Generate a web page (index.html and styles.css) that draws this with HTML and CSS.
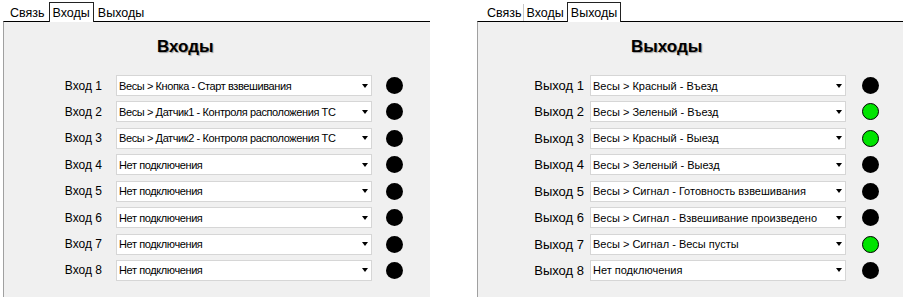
FILE: index.html
```html
<!DOCTYPE html>
<html lang="ru">
<head>
  <meta charset="UTF-8" />
  <meta name="viewport" content="width=device-width, initial-scale=1.0"/>
  <title>Входы / Выходы</title>
  <link rel="stylesheet" href="styles.css">
</head>
<body>

  <div class="tabctl">
    <div class="tabs">
      <span class="tab">Связь</span>
      <span class="tab active">Входы</span>
      <span class="tab">Выходы</span>
    </div>
    <div class="panel">
      <h2 class="title">Входы</h2>
      <div class="rows">
        <span class="label">Вход 1</span>
        <div class="combo"><span>Весы &gt; Кнопка - Старт взвешивания</span><i class="arrow"></i></div>
        <span class="led"></span>

        <span class="label">Вход 2</span>
        <div class="combo"><span>Весы &gt; Датчик1 - Контроля расположения ТС</span><i class="arrow"></i></div>
        <span class="led"></span>

        <span class="label">Вход 3</span>
        <div class="combo"><span>Весы &gt; Датчик2 - Контроля расположения ТС</span><i class="arrow"></i></div>
        <span class="led"></span>

        <span class="label">Вход 4</span>
        <div class="combo"><span>Нет подключения</span><i class="arrow"></i></div>
        <span class="led"></span>

        <span class="label">Вход 5</span>
        <div class="combo"><span>Нет подключения</span><i class="arrow"></i></div>
        <span class="led"></span>

        <span class="label">Вход 6</span>
        <div class="combo"><span>Нет подключения</span><i class="arrow"></i></div>
        <span class="led"></span>

        <span class="label">Вход 7</span>
        <div class="combo"><span>Нет подключения</span><i class="arrow"></i></div>
        <span class="led"></span>

        <span class="label">Вход 8</span>
        <div class="combo"><span>Нет подключения</span><i class="arrow"></i></div>
        <span class="led"></span>
      </div>
    </div>
  </div>

  <div class="tabctl second">
    <div class="tabs">
      <span class="tab sep">Связь</span>
      <span class="tab">Входы</span>
      <span class="tab active">Выходы</span>
    </div>
    <div class="panel">
      <h2 class="title">Выходы</h2>
      <div class="rows outputs">
        <span class="label">Выход 1</span>
        <div class="combo"><span>Весы &gt; Красный - Въезд</span><i class="arrow"></i></div>
        <span class="led"></span>

        <span class="label">Выход 2</span>
        <div class="combo"><span>Весы &gt; Зеленый - Въезд</span><i class="arrow"></i></div>
        <span class="led on"></span>

        <span class="label">Выход 3</span>
        <div class="combo"><span>Весы &gt; Красный - Выезд</span><i class="arrow"></i></div>
        <span class="led on"></span>

        <span class="label">Выход 4</span>
        <div class="combo"><span>Весы &gt; Зеленый - Выезд</span><i class="arrow"></i></div>
        <span class="led"></span>

        <span class="label">Выход 5</span>
        <div class="combo"><span>Весы &gt; Сигнал - Готовность взвешивания</span><i class="arrow"></i></div>
        <span class="led"></span>

        <span class="label">Выход 6</span>
        <div class="combo"><span>Весы &gt; Сигнал - Взвешивание произведено</span><i class="arrow"></i></div>
        <span class="led"></span>

        <span class="label">Выход 7</span>
        <div class="combo"><span>Весы &gt; Сигнал - Весы пусты</span><i class="arrow"></i></div>
        <span class="led on"></span>

        <span class="label">Выход 8</span>
        <div class="combo"><span>Нет подключения</span><i class="arrow"></i></div>
        <span class="led"></span>
      </div>
    </div>
  </div>

</body>
</html>
```

FILE: styles.css
```css
body {
  margin: 0;
  font-family: "Liberation Sans", Arial, sans-serif;
  font-size: 12px;
  color: #000;
  background-color: #ffffff;
  display: flex;
  height: 100vh;
  overflow: hidden;
}

.tabctl {
  display: flex;
  flex-direction: column;
  flex: 0 0 427px;
  margin-left: 3px;
}

.tabctl.second {
  margin-left: 47px;
}

.tabs {
  height: 21px;
  display: flex;
  align-items: flex-end;
  padding-left: 3px;
  font-size: 12.5px;
}

.second .tabs {
  padding-left: 7px;
}

.tab {
  line-height: 16px;
  padding: 1px 4px 0;
  white-space: nowrap;
}

.second .tab {
  padding: 1px 3px 0;
}

.second .tab.sep {
  border-right: 1px solid #c8c8c8;
  padding-right: 1px;
}

.tab.active,
.second .tab.active {
  position: relative;
  z-index: 1;
  background-color: #fff;
  border: 1px solid #222;
  border-bottom: none;
  padding: 2px 3px 1px;
  margin-bottom: -1px;
}

.panel {
  flex: 1;
  background-color: #f0f0f0;
  border-top: 1px solid #000;
  border-left: 1px solid #a0a0a0;
  padding-top: 15px;
}

.title {
  margin: 0;
  padding-left: 153px;
  font-size: 17px;
  line-height: 20px;
  font-weight: bold;
  text-shadow: 1px 1px 1px #9a9a9a;
}

.rows {
  display: grid;
  grid-template-columns: 60px 256px 17px;
  grid-auto-rows: 21px;
  column-gap: 14px;
  row-gap: 5.43px;
  align-items: center;
  margin-top: 18px;
  padding-left: 38px;
}

.rows.outputs {
  column-gap: 6px;
  padding-left: 46px;
}

.label {
  text-align: right;
  white-space: nowrap;
}

.outputs .label {
  font-size: 13px;
}

.combo {
  height: 21px;
  box-sizing: border-box;
  display: flex;
  align-items: center;
  justify-content: space-between;
  background-color: #fff;
  border: 1px solid #d6d6d6;
  padding-left: 2px;
  font-size: 11px;
  letter-spacing: -0.4px;
  white-space: nowrap;
  overflow: hidden;
}

.outputs .combo {
  letter-spacing: 0;
}

.arrow {
  flex: none;
  width: 0;
  height: 0;
  border-left: 3.5px solid transparent;
  border-right: 3.5px solid transparent;
  border-top: 4px solid #000;
  margin-right: 3px;
}

.led {
  width: 17px;
  height: 17px;
  box-sizing: border-box;
  border-radius: 50%;
  background-color: #000;
}

.outputs .led {
  margin-left: 10px;
}

.led.on {
  background-color: #00e400;
  border: 1px solid #000;
}
```
